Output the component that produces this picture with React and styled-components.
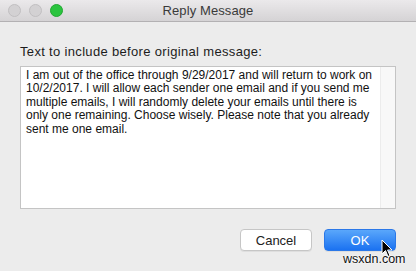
import styled, { createGlobalStyle } from "styled-components";

const Global = createGlobalStyle`
  html, body {
    margin: 0;
    padding: 0;
    background: #ececec;
  }
  body {
    font-family: "Liberation Sans", Arial, sans-serif;
  }
`;

const Window = styled.div`
  position: relative;
  width: 416px;
  height: 271px;
  background: #ececec;
  display: flex;
  flex-direction: column;
  overflow: hidden;
`;

const TitleBar = styled.div`
  height: 21px;
  display: grid;
  grid-template-columns: 1fr auto 1fr;
  align-items: center;
  background: linear-gradient(#ebe9eb, #d5d3d5);
  border-bottom: 1px solid #b3b1b3;
`;

const Lights = styled.div`
  display: flex;
  gap: 8px;
  padding-left: 8px;
`;

const Light = styled.span`
  width: 11px;
  height: 11px;
  border-radius: 50%;
  background: ${(p) => (p.$on ? "#2bc43f" : "#d3d1d3")};
  border: 1px solid ${(p) => (p.$on ? "#22a832" : "#c1bfc1")};
`;

const Title = styled.div`
  font-size: 13px;
  color: #3a3a3a;
  letter-spacing: 0.1px;
`;

const Body = styled.div`
  flex: 1;
  display: flex;
  flex-direction: column;
  padding: 22px 20px 0 20px;
`;

const Label = styled.div`
  font-size: 13px;
  line-height: 16px;
  letter-spacing: 0.33px;
  color: #1c1c1c;
`;

const TextBox = styled.div`
  margin-top: 6px;
  height: 141px;
  display: flex;
  background: #fff;
  border: 1px solid #c4c4c4;
`;

const Content = styled.div`
  flex: 1;
  padding: 2px 4px 0 5px;
  font-size: 12px;
  line-height: 13.4px;
  color: #111;
`;

const Track = styled.div`
  width: 14px;
  background: #f8f8f8;
  border-left: 1px solid #ececec;
`;

const Footer = styled.div`
  display: flex;
  justify-content: flex-end;
  gap: 12px;
  margin-top: 20px;
`;

const Button = styled.div`
  width: 72px;
  height: 22px;
  box-sizing: border-box;
  border-radius: 4px;
  display: flex;
  align-items: center;
  justify-content: center;
  font-size: 13px;
  color: ${(p) => (p.$primary ? "#fff" : "#222")};
  background: ${(p) =>
    p.$primary ? "linear-gradient(#5aa7fb, #1b72f1)" : "#fff"};
  border: 1px solid ${(p) => (p.$primary ? "#2b78e8" : "#c6c6c6")};
  box-shadow: 0 1px 0 rgba(0, 0, 0, 0.06);
`;

const Cursor = styled.svg`
  position: absolute;
  left: 381px;
  top: 239px;
`;

const Watermark = styled.div`
  position: absolute;
  left: 343px;
  top: 252px;
  font-size: 12.5px;
  color: #111;
  text-shadow: 0 0 2px #fff, 0 0 2px #fff;
`;

export default function App() {
  return (
    <Window>
      <Global />
      <TitleBar>
        <Lights>
          <Light />
          <Light />
          <Light $on />
        </Lights>
        <Title>Reply Message</Title>
        <div />
      </TitleBar>
      <Body>
        <Label>Text to include before original message:</Label>
        <TextBox>
          <Content>
            I am out of the office through 9/29/2017 and will return to work on
            10/2/2017. I will allow each sender one email and if you send me
            multiple emails, I will randomly delete your emails until there is
            only one remaining. Choose wisely. Please note that you already
            sent me one email.
          </Content>
          <Track />
        </TextBox>
        <Footer>
          <Button>Cancel</Button>
          <Button $primary>OK</Button>
        </Footer>
      </Body>
      <Cursor width="12" height="19" viewBox="0 0 12 19">
        <path
          d="M1 1 L1 15 L4.5 11.5 L7 17.5 L9 16.7 L6.6 11 L11 11 Z"
          fill="#000"
          stroke="#fff"
          strokeWidth="1"
          strokeLinejoin="round"
        />
      </Cursor>
      <Watermark>wsxdn.com</Watermark>
    </Window>
  );
}
